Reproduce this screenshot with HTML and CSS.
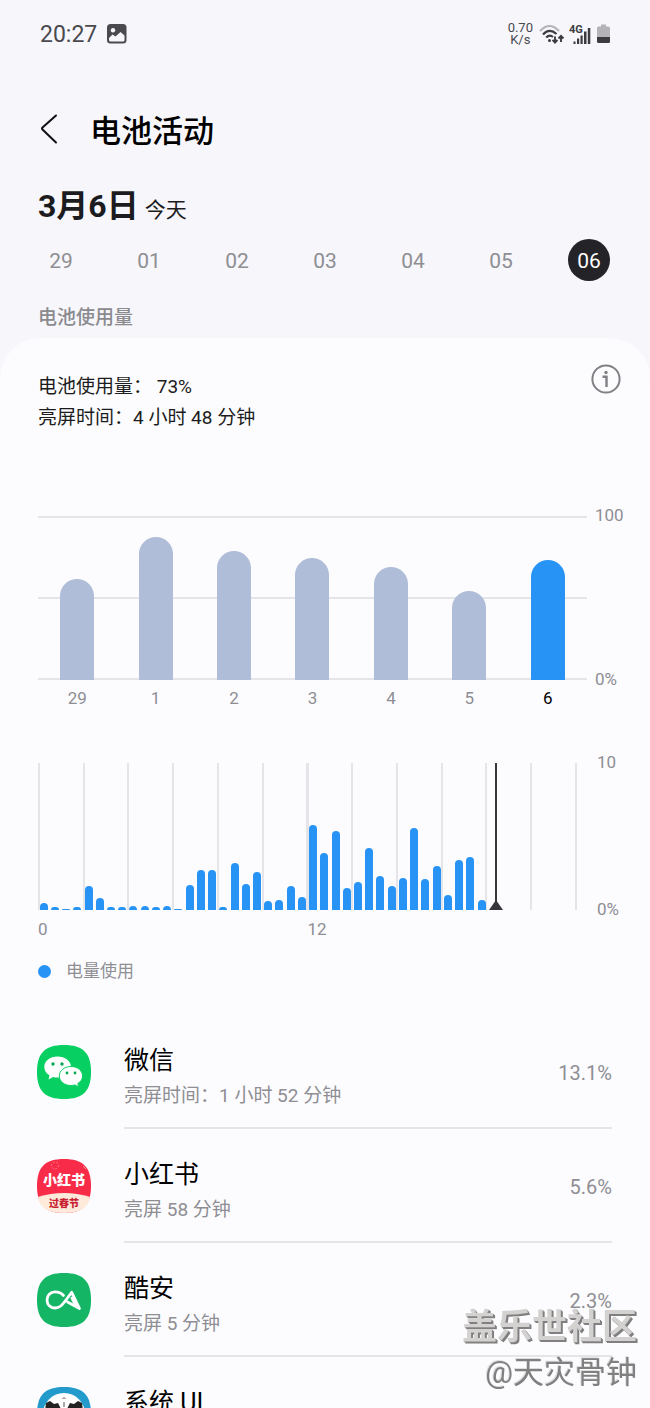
FILE: index.html
```html
<!DOCTYPE html>
<html lang="zh-CN">
<head>
    <meta charset="UTF-8">
    <meta name="viewport" content="width=device-width, initial-scale=1.0">
    <title>电池活动</title>
    <link rel="stylesheet" href="styles.css">
</head>
<body>
    <div class="status-bar">
        <span class="clock">20:27</span>
        <svg class="status-photo" width="20" height="20" viewBox="0 0 20 20">
            <rect x="0" y="0" width="19.500" height="19.500" rx="3.500" fill="#4a4a4e"/>
            <circle cx="6" cy="6.200" r="2.200" fill="#f6f6fb"/>
            <path d="M2 14 L5.500 10.500 L8.500 12.500 L13.500 8 L17.500 11.500 V16 Q17.500 17.500 16 17.500 H3.500 Q2 17.500 2 16 Z" fill="#f6f6fb"/>
        </svg>
        <div class="status-right">
            <div class="net-speed">0.70<br>K/s</div>
            <svg width="26" height="21" viewBox="0 0 26 21" fill="none" stroke="#3c3c40">
                <path d="M1 7 Q10.500 -3 20 7" stroke="#b4b4b8" stroke-width="2"/>
                <path d="M4 10.500 Q10.500 3.500 17.500 10" stroke-width="2.200"/>
                <path d="M7.200 13.600 Q10.500 10 14 13" stroke-width="2.200"/>
                <circle cx="10.500" cy="16.500" r="1.500" fill="#3c3c40" stroke="none"/>
                <path d="M16 12.500 V18 M13.500 15.800 L16 18.500 L18.500 15.800" stroke-width="1.900"/>
                <path d="M22 18 V12 M19.500 14.500 L22 11.800 L24.500 14.500" stroke-width="1.900"/>
            </svg>
            <svg width="24" height="21" viewBox="0 0 24 21" fill="#3c3c40">
                <text x="0" y="9" class="net-type">4G</text>
                <rect x="4.500" y="17.500" width="2" height="2.500"/>
                <rect x="8" y="14.500" width="2.200" height="5.500"/>
                <rect x="11.500" y="11.500" width="2.200" height="8.500"/>
                <rect x="15" y="7.500" width="2.500" height="12.500"/>
                <rect x="18.800" y="4" width="2.500" height="16"/>
            </svg>
            <svg width="13" height="20" viewBox="0 0 13 20">
                <path d="M4 0.500 H9 V2.500 H11.500 Q13 2.500 13 4 V14 H0 V4 Q0 2.500 1.500 2.500 H4 Z" fill="#b4b4b8"/>
                <path d="M0 13 H13 V17.500 Q13 19 11.500 19 H1.500 Q0 19 0 17.500 Z" fill="#3c3c40"/>
            </svg>
        </div>
    </div>

    <header class="header">
        <button class="back-btn" aria-label="返回">
            <svg width="18" height="30" viewBox="0 0 18 30" fill="none" stroke="#111" stroke-width="2" stroke-linecap="round" stroke-linejoin="round">
                <path d="M16 1.500 L2.500 13.500 Q1.500 14.500 2.500 15.500 L16 28.500"/>
            </svg>
        </button>
        <h1>电池活动</h1>
    </header>

    <div class="date-row">
        <span class="date">3月6日</span>
        <span class="today">今天</span>
    </div>

    <nav class="days">
        <button class="day">29</button>
        <button class="day">01</button>
        <button class="day">02</button>
        <button class="day">03</button>
        <button class="day">04</button>
        <button class="day">05</button>
        <button class="day active">06</button>
    </nav>

    <h2 class="section-title">电池使用量</h2>

    <main class="card">
        <div class="summary">
            <div class="summary-text">
                <p>电池使用量： 73%</p>
                <p>亮屏时间：4 小时 48 分钟</p>
            </div>
            <button class="info-btn" aria-label="信息">
                <svg width="30" height="30" viewBox="0 0 30 30" fill="none" stroke="#808085" stroke-width="2">
                    <circle cx="15" cy="15" r="13.600"/>
                    <path d="M11.500 12.800 H15.500 V23" stroke-width="2.400"/>
                    <circle cx="15" cy="8.500" r="1.700" fill="#808085" stroke="none"/>
                </svg>
            </button>
        </div>

        <div class="chart week-chart">
            <div class="plot week-plot">
                <div class="slot"><div class="bar" style="height: 61.5%"></div></div>
                <div class="slot"><div class="bar" style="height: 87%"></div></div>
                <div class="slot"><div class="bar" style="height: 78.5%"></div></div>
                <div class="slot"><div class="bar" style="height: 74.5%"></div></div>
                <div class="slot"><div class="bar" style="height: 69%"></div></div>
                <div class="slot"><div class="bar" style="height: 54%"></div></div>
                <div class="slot"><div class="bar current" style="height: 73%"></div></div>
            </div>
            <div class="y-axis"><span>100</span><span>0%</span></div>
            <div class="week-labels">
                <span>29</span><span>1</span><span>2</span><span>3</span><span>4</span><span>5</span><span class="current">6</span>
            </div>
        </div>

        <div class="chart day-chart">
            <div class="plot day-plot" id="dayPlot">
                <div class="now"></div>
            </div>
            <div class="y-axis"><span>10</span><span>0%</span></div>
            <div class="day-labels"><span>0</span><span>12</span></div>
        </div>

        <div class="legend"><span class="dot"></span>电量使用</div>

        <ul class="apps">
            <li class="app">
                <svg class="app-icon" viewBox="0 0 54 54">
                    <path d="M27 0 C46 0 54 8 54 27 S46 54 27 54 S0 46 0 27 S8 0 27 0 Z" fill="#07cf62"/>
                    <path d="M20.500 11.500 C13 11.500 7.300 16 7.300 22 C7.300 25.500 9.200 28.300 12.500 30.300 L11.500 34.500 L16.200 32 C17.600 32.400 19 32.600 20.500 32.600 C28 32.600 34 28 34 22 S28 11.500 20.500 11.500 Z" fill="#fff"/>
                    <path d="M34 21.500 C27.500 21.500 22.300 25.700 22.300 31 S27.500 40.500 34 40.500 C35.500 40.500 36.800 40.300 38 39.900 L41.500 42 L40.800 38.500 C43.800 36.800 45.600 34.200 45.600 31 C45.600 25.700 40.500 21.500 34 21.500 Z" fill="#fff" stroke="#07cf62" stroke-width="1"/>
                    <g fill="#07a650">
                        <circle cx="16" cy="19" r="1.700"/>
                        <circle cx="25" cy="19" r="1.700"/>
                        <circle cx="30" cy="28" r="1.400"/>
                        <circle cx="38" cy="28" r="1.400"/>
                    </g>
                </svg>
                <div class="app-body">
                    <div class="app-text">
                        <h3>微信</h3>
                        <p>亮屏时间：1 小时 52 分钟</p>
                    </div>
                    <span class="percent">13.1%</span>
                </div>
            </li>
            <li class="app">
                <svg class="app-icon" viewBox="0 0 54 54">
                    <path d="M27 0 C46 0 54 8 54 27 S46 54 27 54 S0 46 0 27 S8 0 27 0 Z" fill="#f82c49"/>
                    <path d="M0.800 38 Q27 30 53.200 38 C51 49 43 54 27 54 S3 49 0.800 38 Z" fill="#fdeadb"/>
                    <g fill="none" stroke="#ff8a94" stroke-width="1">
                        <circle cx="18" cy="6.500" r="3.500" stroke-dasharray="1.500 2"/>
                        <path d="M46 7 L49 10"/>
                    </g>
                    <text x="27" y="26" class="red-logo">小红书</text>
                    <text x="27" y="48" class="red-sub">过春节</text>
                </svg>
                <div class="app-body">
                    <div class="app-text">
                        <h3>小红书</h3>
                        <p>亮屏 58 分钟</p>
                    </div>
                    <span class="percent">5.6%</span>
                </div>
            </li>
            <li class="app">
                <svg class="app-icon" viewBox="0 0 54 54">
                    <path d="M27 0 C46 0 54 8 54 27 S46 54 27 54 S0 46 0 27 S8 0 27 0 Z" fill="#14b666"/>
                    <g fill="none" stroke="#fff" stroke-width="2.800" stroke-linejoin="round" stroke-linecap="round">
                        <path d="M26.500 22.500 C24 19.700 21 18.900 18 18.900 C13.300 18.900 10 22.500 10 27 S13.300 35 18 35 C22 35 24.500 33 27 29.500 L34.700 19.300 L42.500 35.500 L30.500 29"/>
                        <path d="M35 25 L39 33"/>
                    </g>
                </svg>
                <div class="app-body">
                    <div class="app-text">
                        <h3>酷安</h3>
                        <p>亮屏 5 分钟</p>
                    </div>
                    <span class="percent">2.3%</span>
                </div>
            </li>
            <li class="app">
                <svg class="app-icon" viewBox="0 0 54 54">
                    <path d="M27 0 C46 0 54 8 54 27 S46 54 27 54 S0 46 0 27 S8 0 27 0 Z" fill="#229acb"/>
                    <circle cx="27" cy="27" r="21" fill="#fff"/>
                    <path d="M9 16 L13 14 L17 17 L21 16 L24 22 L8 24 Z M45 16 L41 14 L37 17 L33 16 L30 22 L46 24 Z" fill="#222"/>
                    <path d="M25.500 12 L27 10.500 L28.500 12 M27 15 V20" fill="none" stroke="#555" stroke-width="1"/>
                </svg>
                <div class="app-body">
                    <div class="app-text">
                        <h3>系统 UI</h3>
                    </div>
                </div>
            </li>
        </ul>
    </main>

    <div class="watermark">
        <div class="site">盖乐世社区</div>
        <div class="author">@天灾骨钟</div>
    </div>

    <script src="script.js"></script>
</body>
</html>
```
FILE: styles.css
```css
* {
    box-sizing: border-box;
    margin: 0;
    padding: 0;
}
body {
    font-family: Roboto, "Noto Sans CJK SC", sans-serif;
    background-color: #f6f6fb;
    color: #1c1c20;
    height: 100vh;
    overflow: hidden;
}
button {
    border: none;
    background: none;
    font-family: inherit;
    cursor: pointer;
}
svg {
    display: block;
}

/* status bar */
.status-bar {
    display: flex;
    align-items: center;
    height: 68px;
    padding: 0 40px;
    color: #4a4a4e;
}
.clock {
    font-size: 23px;
}
.status-photo {
    margin-left: 10px;
}
.status-right {
    display: flex;
    align-items: center;
    gap: 4px;
    margin-left: auto;
}
.net-speed {
    font-size: 13px;
    line-height: 12px;
    text-align: center;
    margin-right: 2px;
}
.net-type {
    font-size: 11px;
    font-weight: 700;
}

/* header */
.header {
    display: flex;
    align-items: center;
    gap: 32px;
    height: 122px;
    padding: 0 40px;
}
h1 {
    padding-top: 6px;
    font-size: 31px;
    line-height: 40px;
    font-weight: 500;
    color: #000;
}
.date-row {
    display: flex;
    align-items: baseline;
    gap: 6px;
    height: 49px;
    padding: 0 38px;
    line-height: 32px;
}
.date {
    font-size: 32px;
    font-weight: 700;
}
.today {
    font-size: 21px;
}
.days {
    display: grid;
    grid-template-columns: repeat(7, 1fr);
    justify-items: center;
    padding: 0 17px;
}
.day {
    width: 42px;
    height: 42px;
    padding-top: 2px;
    border-radius: 50%;
    font-size: 21px;
    color: #8e8e93;
}
.day.active {
    background-color: #232328;
    color: #fff;
}
.section-title {
    padding: 22px 38px 6px;
    font-size: 19px;
    line-height: 29px;
    font-weight: 500;
    color: #8a8a8f;
}

/* card */
.card {
    background-color: #fcfcff;
    border-radius: 40px 40px 0 0;
    padding: 26px 38px 0;
}
.summary {
    display: flex;
    justify-content: space-between;
    align-items: flex-start;
    margin-right: -9px;
}
.summary-text {
    padding-top: 7px;
    font-size: 19px;
    line-height: 31px;
}

/* charts */
.chart {
    display: grid;
    font-size: 17px;
    line-height: 20px;
    color: #8e8e93;
}
.week-chart {
    grid-template-columns: 1fr 25px;
    column-gap: 8px;
    margin-top: 83px;
    margin-right: -8px;
}
.plot {
    position: relative;
    display: grid;
    align-items: end;
}
.week-plot {
    grid-template-columns: repeat(7, 1fr);
    height: 164px;
    background-image: linear-gradient(#e4e4e9, #e4e4e9), linear-gradient(#e4e4e9, #e4e4e9), linear-gradient(#e4e4e9, #e4e4e9);
    background-size: 100% 2px;
    background-position: top, center, bottom;
    background-repeat: no-repeat;
}
.slot {
    display: flex;
    align-items: flex-end;
    justify-content: center;
    height: 100%;
}
.bar {
    width: 34px;
    border-radius: 17px 17px 0 0;
    background-color: #b0bdd8;
}
.bar.current {
    background-color: #2693f5;
}
.y-axis {
    display: flex;
    flex-direction: column;
    justify-content: space-between;
    margin: -11px 0 -9px;
}
.week-labels {
    display: grid;
    grid-template-columns: repeat(7, 1fr);
    text-align: center;
    margin-top: 8px;
}
.week-labels .current {
    color: #000;
}
.day-chart {
    grid-template-columns: 1fr 15px;
    column-gap: 20px;
    margin-top: 55px;
}
.day-plot {
    grid-template-columns: repeat(48, 1fr);
    justify-items: center;
    height: 147px;
    background: repeating-linear-gradient(to right, #e4e4e9 0 2px, transparent 2px calc((100% - 2px) / 12));
}
.hour-bar {
    width: 8px;
    border-radius: 4px 4px 0 0;
    background-color: #2693f5;
}
.now {
    position: absolute;
    top: 0;
    bottom: 0;
    left: 85%;
    width: 2px;
    margin-left: -1px;
    background-color: #37373b;
}
.now::after {
    content: "";
    position: absolute;
    bottom: 0;
    left: -6px;
    border: 7px solid transparent;
    border-top: none;
    border-bottom: 10px solid #37373b;
}
.day-labels {
    display: grid;
    grid-template-columns: 1fr 1fr;
    margin-top: 9px;
}
.legend {
    display: flex;
    align-items: center;
    gap: 15px;
    margin-top: 20px;
    font-size: 17px;
    line-height: 24px;
    color: #8e8e93;
}
.dot {
    width: 13px;
    height: 13px;
    border-radius: 50%;
    background-color: #2693f5;
}

/* app list */
.apps {
    list-style: none;
    margin-top: 32px;
}
.app {
    display: flex;
    align-items: center;
    gap: 33px;
    margin-left: -1px;
}
.app-icon {
    flex: none;
    width: 54px;
    height: 54px;
}
.app-body {
    flex: 1;
    display: flex;
    justify-content: space-between;
    height: 114px;
    padding-top: 27px;
    border-bottom: 2px solid #e4e4e9;
}
h3 {
    font-size: 25px;
    line-height: 38px;
    font-weight: 400;
    color: #000;
}
.app-text p {
    font-size: 19px;
    line-height: 31px;
    color: #8e8e93;
}
.percent {
    font-size: 20px;
    line-height: 62px;
    color: #8e8e93;
}
.red-logo {
    font-size: 14px;
    font-weight: 900;
    fill: #fff;
    text-anchor: middle;
}
.red-sub {
    font-size: 10px;
    font-weight: 900;
    fill: #c8202f;
    text-anchor: middle;
}

/* watermark */
.watermark {
    position: fixed;
    right: 13px;
    bottom: 13px;
    text-align: right;
    pointer-events: none;
}
.site {
    font-size: 35px;
    line-height: 46px;
    font-weight: 700;
    color: #d4d2d0;
    text-shadow: 1px 1px 0 #808080, 2px 2px 0 #808080;
}
.author {
    font-size: 31px;
    line-height: 44px;
    color: #808080;
    text-shadow: -1px -1px 0 #dcdcdc;
}
```
FILE: script.js
```js
// battery usage per half hour, in percent
const usage = [
    0.5, 0.2, 0.1, 0.2, 1.6, 0.8, 0.2, 0.2, 0.3, 0.3, 0.2, 0.3,
    0.1, 1.7, 2.7, 2.7, 0.2, 3.2, 1.8, 2.6, 0.6, 0.7, 1.6, 0.9,
    5.8, 3.9, 5.4, 1.5, 1.9, 4.2, 2.3, 1.6, 2.2, 5.6, 2.1, 3,
    1, 3.4, 3.6, 0.7
];
const dayPlot = document.getElementById('dayPlot');

usage.forEach(value => {
    const bar = document.createElement('div');
    bar.className = 'hour-bar';
    bar.style.height = value * 10 + '%';
    dayPlot.appendChild(bar);
});
```
